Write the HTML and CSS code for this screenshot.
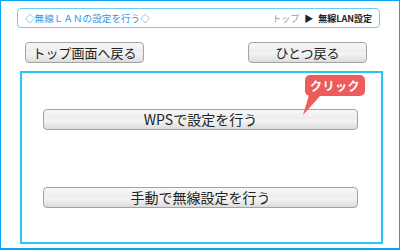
FILE: index.html
```html
<!DOCTYPE html>
<html lang="ja">
<head>
    <meta charset="UTF-8">
    <title>無線LANの設定を行う</title>
    <link rel="stylesheet" href="styles.css">
</head>
<body>
    <div class="frame">
        <header class="title-bar">
            <h1>◇無線ＬＡＮの設定を行う◇</h1>
            <p class="crumbs"><span class="crumb-link">トップ</span> ▶ <b>無線LAN設定</b></p>
        </header>

        <nav class="nav-row">
            <button class="btn btn-small">トップ画面へ戻る</button>
            <button class="btn btn-small">ひとつ戻る</button>
        </nav>

        <main class="panel">
            <div class="choice">
                <button class="btn btn-wide">WPSで設定を行う</button>
                <div class="bubble">クリック
                    <svg class="bubble-tail" width="22" height="21" viewBox="0 0 22 21">
                        <polygon points="7,0 19,0 1,20" fill="#ee5b5b"/>
                    </svg>
                </div>
            </div>
            <div class="choice">
                <button class="btn btn-wide">手動で無線設定を行う</button>
            </div>
        </main>
    </div>
</body>
</html>
```

FILE: styles.css
```css
/* Base */
* {
    margin: 0;
    padding: 0;
    box-sizing: border-box;
}

body {
    font-family: "Noto Sans CJK JP", "Noto Sans", sans-serif;
    background: #fff;
    color: #222;
}

.frame {
    width: 400px;
    height: 250px;
    border: 1px solid #0aa6f5;
    border-bottom-width: 2px;
}

/* Title bar */
.title-bar {
    display: flex;
    justify-content: space-between;
    align-items: center;
    width: 363px;
    height: 20px;
    margin: 7px 0 0 16px;
    padding: 0 7px 0 7px;
    border: 1px solid #6ccdf7;
    border-radius: 4px;
}

.title-bar h1 {
    font-size: 9.5px;
    font-weight: normal;
    letter-spacing: 0.1px;
    color: #2d96e6;
}

.crumbs {
    font-size: 9px;
    color: #222;
}

.crumb-link {
    color: #999;
    margin-right: 3px;
}

.crumbs b {
    margin-left: 3px;
    font-weight: bold;
}

/* Buttons */
.nav-row {
    display: flex;
    justify-content: space-between;
    margin-top: 14px;
    padding: 0 32px 0 24px;
}

.btn {
    font-family: inherit;
    color: #222;
    border: 1px solid #a3a3a3;
    border-radius: 4px;
    background: linear-gradient(to bottom, #f8f8f8 0%, #eeeeee 40%, #f4f4f4 55%, #dcdcdc 100%);
    cursor: pointer;
}

.btn-small {
    width: 119px;
    height: 21px;
    font-size: 13px;
    line-height: 19px;
}

.btn-wide {
    width: 315px;
    height: 21px;
    font-size: 14px;
    line-height: 19px;
}

/* Panel */
.panel {
    position: relative;
    width: 363px;
    height: 173px;
    margin: 8px 0 0 19px;
    border: 2px solid #26c6f5;
    padding: 33px 0 0 21px;
}

.choice {
    position: relative;
    height: 21px;
}

.choice + .choice {
    margin-top: 57px;
}

.bubble {
    position: absolute;
    left: 262px;
    top: -31px;
    width: 60px;
    height: 21px;
    border-radius: 5px;
    background: #ee5b5b;
    color: #fff;
    font-size: 12px;
    font-weight: bold;
    line-height: 21px;
    text-align: center;
    letter-spacing: 0.5px;
}

.bubble-tail {
    position: absolute;
    left: -3px;
    top: 20px;
}
```
